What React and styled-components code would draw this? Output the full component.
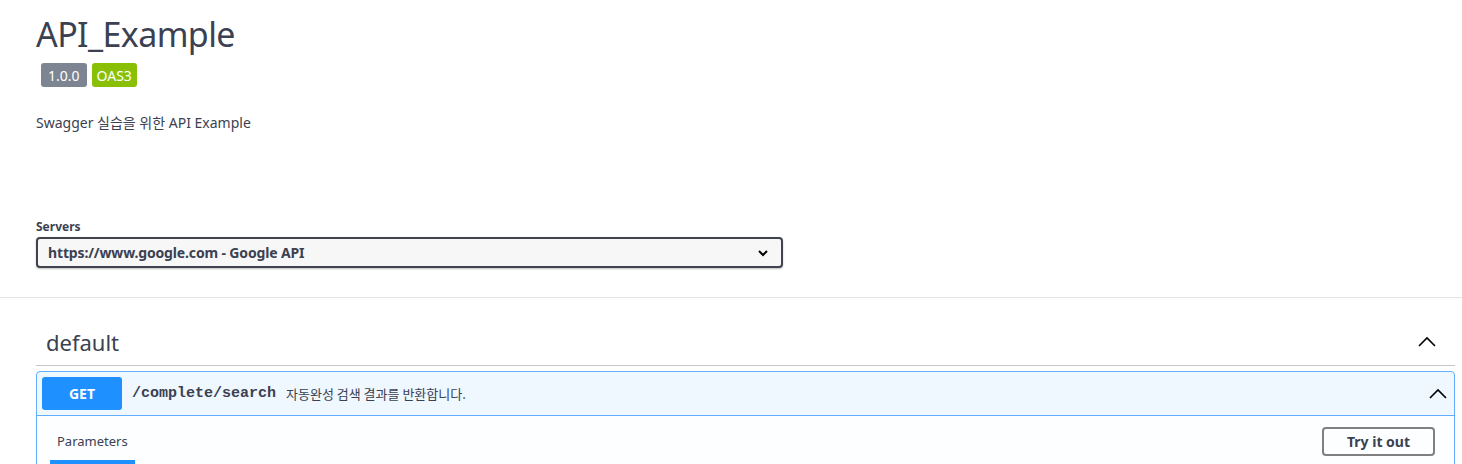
import React from "react"
import styled, { createGlobalStyle } from "styled-components"

const GlobalStyle = createGlobalStyle`
  body {
    margin: 0;
    background: #fff;
    font-family: "Noto Sans", "Noto Sans CJK KR", sans-serif;
    color: #3b4151;
  }
`;

const Page = styled.div`
  width: 1462px;
  height: 464px;
  overflow: hidden;
`;

const Info = styled.div`
  padding: 12px 36px 0;
`;

const Title = styled.h2`
  margin: 0;
  font-size: 34px;
  font-weight: 400;
  letter-spacing: -0.6px;
  line-height: 44px;
  color: #3b4151;
`;

const Badges = styled.div`
  display: flex;
  gap: 5px;
  margin: 7px 0 0 5px;
`;

const Badge = styled.span`
  display: inline-flex;
  align-items: center;
  height: 24px;
  padding: 0 ${({ pad }) => pad}px;
  border-radius: 3px;
  font-size: 14px;
  color: #fff;
  background: ${({ color }) => color};
`;

const Description = styled.p`
  margin: 26px 0 0;
  font-size: 14px;
  line-height: 20px;
`;

const SchemeContainer = styled.div`
  padding: 86px 36px 29px;
  border-bottom: 1px solid #e4e4e4;
`;

const Label = styled.div`
  font-size: 12px;
  font-weight: 700;
  line-height: 16px;
  margin-bottom: 2px;
`;

const Select = styled.div`
  box-sizing: border-box;
  width: 747px;
  height: 31px;
  display: flex;
  align-items: center;
  justify-content: space-between;
  padding: 0 12px 0 10px;
  border: 2px solid #41444e;
  border-radius: 4px;
  background: #f7f7f7;
  box-shadow: 0 1px 2px rgba(0, 0, 0, 0.25);
  font-size: 14px;
  font-weight: 700;
  letter-spacing: -0.15px;
`;

const Tag = styled.div`
  padding: 21px 7px 0 36px;
`;

const TagHeader = styled.div`
  display: flex;
  align-items: center;
  justify-content: space-between;
  height: 46px;
  padding: 0 18px 0 10px;
  border-bottom: 1px solid rgba(59, 65, 81, 0.3);
  margin-bottom: 5px;
  font-size: 22px;
`;

const OpBlock = styled.div`
  border: 1px solid #61affe;
  border-radius: 4px;
  background: rgba(97, 175, 254, 0.1);
`;

const Summary = styled.div`
  display: flex;
  align-items: center;
  height: 43px;
  padding: 0 6px 0 5px;
  border-bottom: 1px solid #61affe;
`;

const Method = styled.span`
  display: inline-flex;
  align-items: center;
  justify-content: center;
  width: 80px;
  height: 33px;
  border-radius: 3px;
  background: #1e90ff;
  color: #fff;
  font-size: 14px;
  font-weight: 700;
`;

const Path = styled.span`
  margin-left: 10px;
  font-family: "Liberation Mono", "DejaVu Sans Mono", monospace;
  font-size: 15px;
  font-weight: 700;
  color: #3b4151;
`;

const Summ = styled.span`
  margin-left: 10px;
  flex: 1;
  font-family: "Noto Sans CJK KR", sans-serif;
  font-size: 13px;
  color: #3b4151;
`;

const SectionHeader = styled.div`
  display: flex;
  justify-content: space-between;
  align-items: flex-start;
  height: 60px;
  padding: 0 19px 0 13px;
  background: rgba(255, 255, 255, 0.8);
`;

const TabItem = styled.div`
  margin-top: 15px;
  padding: 0 7px 9px;
  font-size: 13px;
  line-height: 20px;
  border-bottom: 4px solid #1e90ff;
`;

const TryButton = styled.button`
  margin-top: 11px;
  width: 113px;
  height: 29px;
  border: 2px solid #808080;
  border-radius: 4px;
  background: transparent;
  font-family: "Noto Sans", sans-serif;
  font-size: 14px;
  font-weight: 700;
  color: #3b4151;
`;

const Chevron = ({ size = 20 }) => (
  <svg width={size} height={size} viewBox="0 0 20 20">
    <path d="M2 14 L10 6 L18 14" fill="none" stroke="#000" strokeWidth="1.6" />
  </svg>
)

const ChevronDown = () => (
  <svg width="12" height="12" viewBox="0 0 12 12">
    <path d="M2 4 L6 8 L10 4" fill="none" stroke="#000" strokeWidth="2" />
  </svg>
)

export default function App() {
  return (
    <Page>
      <GlobalStyle />
      <Info>
        <Title>API_Example</Title>
        <Badges>
          <Badge color="#7d8492" pad={7}>1.0.0</Badge>
          <Badge color="#89bf04" pad={5}>OAS3</Badge>
        </Badges>
        <Description>Swagger 실습을 위한 API Example</Description>
      </Info>
      <SchemeContainer>
        <Label>Servers</Label>
        <Select>
          <span>https://www.google.com - Google API</span>
          <ChevronDown />
        </Select>
      </SchemeContainer>
      <Tag>
        <TagHeader>
          <span>default</span>
          <Chevron />
        </TagHeader>
        <OpBlock>
          <Summary>
            <Method>GET</Method>
            <Path>/complete/search</Path>
            <Summ>자동완성 검색 결과를 반환합니다.</Summ>
            <Chevron />
          </Summary>
          <SectionHeader>
            <TabItem>Parameters</TabItem>
            <TryButton>Try it out</TryButton>
          </SectionHeader>
        </OpBlock>
      </Tag>
    </Page>
  )
}
